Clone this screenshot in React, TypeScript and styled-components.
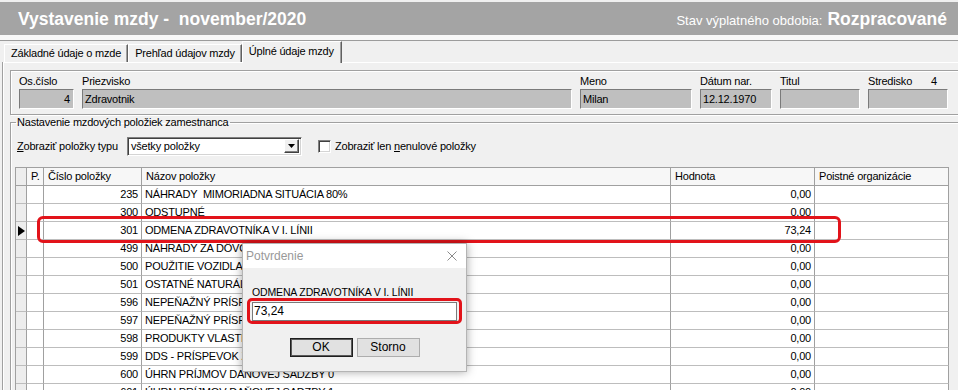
import React from 'react';
import styled, { createGlobalStyle } from 'styled-components';

interface IPayItem {
  no: number,
  name: string,
  value: string,
  current?: boolean
}

const items: IPayItem[] = [
  { no: 235, name: 'NÁHRADY  MIMORIADNA SITUÁCIA 80%', value: '0,00' },
  { no: 300, name: 'ODSTUPNÉ', value: '0,00' },
  { no: 301, name: 'ODMENA ZDRAVOTNÍKA V I. LÍNII', value: '73,24', current: true },
  { no: 499, name: 'NÁHRADY ZA DÔVODY NA STRANE ZAMESTNÁVATEĽA', value: '0,00' },
  { no: 500, name: 'POUŽITIE VOZIDLA NA SÚKROMNÉ ÚČELY', value: '0,00' },
  { no: 501, name: 'OSTATNÉ NATURÁLNE PRÍJMY', value: '0,00' },
  { no: 596, name: 'NEPEŇAŽNÝ PRÍSPEVOK ZAMESTNÁVATEĽA', value: '0,00' },
  { no: 597, name: 'NEPEŇAŽNÝ PRÍSPEVOK NA REKREÁCIU', value: '0,00' },
  { no: 598, name: 'PRODUKTY VLASTNEJ VÝROBY', value: '0,00' },
  { no: 599, name: 'DDS - PRÍSPEVOK ZAMESTNÁVATEĽA', value: '0,00' },
  { no: 600, name: 'ÚHRN PRÍJMOV DAŇOVEJ SADZBY 0', value: '0,00' },
  { no: 601, name: 'ÚHRN PRÍJMOV DAŇOVEJ SADZBY 1', value: '0,00' },
];

const App: React.FC = () => {
  return (
    <>
      <GlobalStyle />
      <Window>
        <TitleBar>
          <Title>Vystavenie mzdy -  november/2020</Title>
          <Status>
            <StatusLabel>Stav výplatného obdobia:</StatusLabel>
            <StatusValue>Rozpracované</StatusValue>
          </Status>
        </TitleBar>
        <Separator />
        <TabStrip>
          <Tab>Základné údaje o mzde</Tab>
          <Tab>Prehľad údajov mzdy</Tab>
          <Tab $active>Úplné údaje mzdy</Tab>
        </TabStrip>
        <TabPage>
          <EmployeeGroup>
            <FieldLabel>Os.číslo</FieldLabel>
            <FieldLabel>Priezvisko</FieldLabel>
            <FieldLabel>Meno</FieldLabel>
            <FieldLabel>Dátum nar.</FieldLabel>
            <FieldLabel>Titul</FieldLabel>
            <FieldLabel $split><span>Stredisko</span><span>4</span></FieldLabel>
            <Field $right>4</Field>
            <Field>Zdravotnik</Field>
            <Field>Milan</Field>
            <Field>12.12.1970</Field>
            <Field />
            <Field />
          </EmployeeGroup>

          <ItemsGroup>
            <Legend>Nastavenie mzdových položiek zamestnanca</Legend>
            <FilterRow>
              <FilterLabel><u>Z</u>obraziť položky typu</FilterLabel>
              <Combo>
                <ComboText>všetky položky</ComboText>
                <ComboButton>
                  <svg width="7" height="4" viewBox="0 0 7 4">
                    <polygon points="0,0 7,0 3.5,4" fill="#000" />
                  </svg>
                </ComboButton>
              </Combo>
              <CheckBox />
              <CheckLabel>Zobraziť len <u>n</u>enulové položky</CheckLabel>
            </FilterRow>

            <Grid>
              <Cell $kind="indicator" $head />
              <Cell $head>P.</Cell>
              <Cell $head>Číslo položky</Cell>
              <Cell $head>Názov položky</Cell>
              <Cell $head>Hodnota</Cell>
              <Cell $head>Poistné organizácie</Cell>
              {items.map(item => (
                <React.Fragment key={item.no}>
                  <Cell $kind="indicator">
                    {item.current && (
                      <svg width="7" height="10" viewBox="0 0 7 10">
                        <polygon points="0,0 7,5 0,10" fill="#000" />
                      </svg>
                    )}
                  </Cell>
                  <Cell />
                  <Cell $right>{item.no}</Cell>
                  <Cell>{item.name}</Cell>
                  <Cell $right>{item.value}</Cell>
                  <Cell />
                </React.Fragment>
              ))}
            </Grid>
          </ItemsGroup>
        </TabPage>

        <RowHighlight />

        <Dialog>
          <DialogTitleBar>
            <span>Potvrdenie</span>
            <svg width="10" height="10" viewBox="0 0 10 10">
              <path d="M0.5 0.5 L9.5 9.5 M9.5 0.5 L0.5 9.5" stroke="#8a8a8a" strokeWidth="1" />
            </svg>
          </DialogTitleBar>
          <DialogBody>
            <PromptLabel>ODMENA ZDRAVOTNÍKA V I. LÍNII</PromptLabel>
            <InputRing>
              <PromptInput>73,24</PromptInput>
            </InputRing>
            <ButtonRow>
              <DialogButton $default>OK</DialogButton>
              <DialogButton>Storno</DialogButton>
            </ButtonRow>
          </DialogBody>
        </Dialog>
      </Window>
    </>
  );
};

// Styled Components
const GlobalStyle = createGlobalStyle`
  html, body {
    margin: 0;
    padding: 0;
    background: #f0f0f0;
  }
  body {
    font-family: "Liberation Sans", Arial, sans-serif;
    font-size: 11px;
    color: #000;
  }
`;

const Window = styled.div`
  position: relative;
  width: 958px;
  height: 390px;
  overflow: hidden;
  background: #f0f0f0;
  letter-spacing: -0.2px;
`;

const TitleBar = styled.div`
  margin-top: 2px;
  height: 33px;
  box-sizing: border-box;
  padding: 2px 11px 0 18px;
  background: #a4a4a4;
  color: #fff;
  display: flex;
  align-items: center;
  justify-content: space-between;
`;

const Title = styled.h1`
  margin: 0;
  font-size: 17.5px;
  font-weight: bold;
  letter-spacing: 0;
  white-space: pre;
`;

const Status = styled.div`
  display: flex;
  align-items: baseline;
  gap: 5px;
  letter-spacing: 0;
`;

const StatusLabel = styled.span`
  font-size: 13px;
`;

const StatusValue = styled.span`
  font-size: 17.5px;
  font-weight: bold;
`;

const Separator = styled.div`
  height: 5px;
  background: #f8f8f8;
  border-bottom: 1px solid #9c9c9c;
`;

const TabStrip = styled.div`
  position: relative;
  z-index: 1;
  height: 21px;
  padding-left: 4px;
  display: flex;
  align-items: flex-end;
`;

const Tab = styled.div<{ $active?: boolean }>`
  height: ${({ $active }) => ($active ? '22px' : '18px')};
  margin-bottom: ${({ $active }) => ($active ? '-1px' : '0')};
  padding: ${({ $active }) => ($active ? '1px 7px 0 6px' : '0 6px')};
  box-sizing: border-box;
  line-height: 17px;
  background: #f0f0f0;
  border-top: 1px solid #fff;
  border-left: 1px solid #fff;
  border-right: 1px solid #606060;
  box-shadow: inset -1px 0 #a0a0a0;
  white-space: nowrap;
`;

const TabPage = styled.div`
  margin-left: 3px;
  border-top: 1px solid #fff;
  border-left: 1px solid #fff;
  box-shadow: -1px 0 #a0a0a0;
  padding: 7px 0 0 6px;
`;

const EmployeeGroup = styled.div`
  margin-right: -12px;
  padding: 3px 0 5px 8px;
  border: 1px solid #a0a0a0;
  box-shadow: inset 1px 1px #fff, 1px 1px #fff;
  display: grid;
  grid-template-columns: 55px 490px 112px 72px 80px 80px;
  column-gap: 8px;
  row-gap: 1px;
`;

const FieldLabel = styled.div<{ $split?: boolean }>`
  line-height: 14px;
  white-space: nowrap;
  display: flex;
  justify-content: ${({ $split }) => ($split ? 'space-between' : 'flex-start')};
  padding-right: ${({ $split }) => ($split ? '11px' : '0')};
`;

const Field = styled.div<{ $right?: boolean }>`
  height: 20px;
  box-sizing: border-box;
  padding: 0 3px 0 2px;
  line-height: 18px;
  text-align: ${({ $right }) => ($right ? 'right' : 'left')};
  background: #bfbfbf;
  border: 1px solid;
  border-color: #7a7a7a #fff #fff #7a7a7a;
`;

const ItemsGroup = styled.fieldset`
  margin: 1px -12px 0 0;
  padding: 0 0 0 4px;
  min-width: 0;
  border: 1px solid #a0a0a0;
  box-shadow: inset 1px 1px #fff;
`;

const Legend = styled.legend`
  margin-left: 1px;
  padding: 0 1px;
  line-height: 13px;
  font-size: 11px;
`;

const FilterRow = styled.div`
  margin-top: 7px;
  height: 20px;
  padding-left: 2px;
  display: flex;
  align-items: center;
`;

const FilterLabel = styled.span`
  width: 110px;
  white-space: nowrap;
`;

const Combo = styled.div`
  width: 175px;
  height: 19px;
  box-sizing: border-box;
  background: #fff;
  border: 1px solid;
  border-color: #808080 #fff #fff #808080;
  box-shadow: inset 1px 1px #404040, inset -1px -1px #d4d4d4;
  display: flex;
  align-items: center;
  padding: 0 2px 0 3px;
`;

const ComboText = styled.span`
  flex: 1;
`;

const ComboButton = styled.div`
  width: 15px;
  height: 14px;
  box-sizing: border-box;
  background: #f0f0f0;
  border: 1px solid;
  border-color: #fff #404040 #404040 #fff;
  box-shadow: inset -1px -1px #808080;
  display: flex;
  align-items: center;
  justify-content: center;
`;

const CheckBox = styled.div`
  width: 13px;
  height: 13px;
  margin-left: 16px;
  box-sizing: border-box;
  background: #fff;
  border: 1px solid;
  border-color: #808080 #fff #fff #808080;
  box-shadow: inset 1px 1px #404040, inset -1px -1px #d4d4d4;
`;

const CheckLabel = styled.span`
  margin-left: 4px;
  white-space: nowrap;
`;

const Grid = styled.div`
  margin-top: 11px;
  width: fit-content;
  display: grid;
  grid-template-columns: 11px 17px 98px 529px 144px 134px;
  grid-auto-rows: 18px;
  border-left: 1px solid #a0a0a0;
  border-top: 1px solid #a0a0a0;
`;

const Cell = styled.div<{ $kind?: 'indicator', $head?: boolean, $right?: boolean }>`
  box-sizing: border-box;
  border-right: 1px solid #a0a0a0;
  border-bottom: 1px solid ${({ $head }) => ($head ? '#a0a0a0' : '#bdbdbd')};
  padding: ${({ $head, $kind }) => ($kind === 'indicator' ? '0' : $head ? '0 3px 0 4px' : '0 3px')};
  line-height: 17px;
  white-space: pre;
  overflow: hidden;
  text-align: ${({ $right }) => ($right ? 'right' : 'left')};
  background: ${({ $kind, $head }) => ($kind === 'indicator' ? '#ededed' : $head ? '#f7f7f7' : '#fff')};
  display: ${({ $kind }) => ($kind === 'indicator' ? 'flex' : 'block')};
  align-items: center;
  justify-content: center;
`;

const RowHighlight = styled.div`
  position: absolute;
  left: 37px;
  top: 216px;
  width: 804px;
  height: 27px;
  box-sizing: border-box;
  border: 3px solid #e2131a;
  border-radius: 6px;
  pointer-events: none;
`;

const Dialog = styled.div`
  position: absolute;
  left: 242px;
  top: 243px;
  width: 225px;
  height: 129px;
  box-sizing: border-box;
  border: 1px solid #b4b4b4;
  background: #f0f0f0;
  box-shadow: 0 0 9px rgba(0, 0, 0, 0.35);
  display: flex;
  flex-direction: column;
  letter-spacing: 0;
`;

const DialogTitleBar = styled.div`
  height: 24px;
  background: #fff;
  padding: 0 9px 0 3px;
  display: flex;
  align-items: center;
  justify-content: space-between;
  color: #999;
  font-size: 12px;
`;

const DialogBody = styled.div`
  flex: 1;
  padding: 18px 0 0 4px;
  display: flex;
  flex-direction: column;
`;

const PromptLabel = styled.div`
  margin-left: 5px;
  font-size: 10.5px;
  letter-spacing: -0.15px;
  line-height: 12px;
`;

const InputRing = styled.div`
  width: 215px;
  box-sizing: border-box;
  border: 3px solid #e2131a;
  border-radius: 5px;
  padding: 1px 2px 0 2px;
`;

const PromptInput = styled.div`
  height: 19px;
  box-sizing: border-box;
  border: 1px solid #7a7a7a;
  background: #fff;
  padding-left: 1px;
  line-height: 17px;
  font-size: 12px;
`;

const ButtonRow = styled.div`
  margin-top: 14px;
  margin-left: -4px;
  display: flex;
  justify-content: center;
  gap: 4px;
`;

const DialogButton = styled.div<{ $default?: boolean }>`
  width: 63px;
  height: 19px;
  box-sizing: border-box;
  background: #e1e1e1;
  border: 1px solid ${({ $default }) => ($default ? '#1e1e1e' : '#adadad')};
  box-shadow: ${({ $default }) => ($default ? 'inset 0 0 0 1px #5a5a5a' : 'none')};
  font-size: 12px;
  line-height: 17px;
  text-align: center;
`;

export default App;
